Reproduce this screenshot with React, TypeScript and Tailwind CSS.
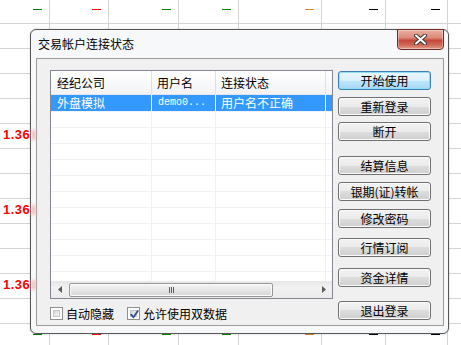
import React from "react";

const cellW = [
  "w-[50px]",
  "w-[59px]",
  "w-[70px]",
  "w-[60px]",
  "w-[83px]",
  "w-[64px]",
  "w-[62px]",
];
const dashColors = ["#008000", "#ff0000", "#008000", "#008000", "#d9822b", "#000000", "#000000"];

function GridRow({ idx }: { idx: number }) {
  const hasDash = idx === 0 || idx === 13;
  const hasNum = idx === 5 || idx === 8 || idx === 11;
  return (
    <div className={`flex shrink-0 border-b border-[#d4d4d4] ${idx === 0 ? "h-[24px]" : "h-[25px]"}`}>
      {cellW.map((w, j) => (
        <div
          key={j}
          className={`${w} shrink-0 border-r border-[#d4d4d4] flex ${
            hasNum && j === 0 ? "justify-start pl-[3px] pt-[3px]" : "justify-end pr-[7px]"
          } ${idx === 0 ? "pt-[9px]" : idx === 13 ? "pt-[10px]" : ""}`}
        >
          {hasDash && <span className="block w-[9px] h-px" style={{ background: dashColors[j] }} />}
          {hasNum && j === 0 && (
            <span className="text-[13px] leading-[15px] font-bold text-[#ff0000] tracking-[0.5px] [font-family:'Liberation_Sans',Arial,sans-serif]">
              1.36
            </span>
          )}
        </div>
      ))}
      <div className="flex-1" />
    </div>
  );
}

function Btn({ label, primary, mt }: { label: string; primary?: boolean; mt: string }) {
  return (
    <div
      className={`${mt} w-[93px] h-[19px] shrink-0 rounded-[3px] border flex items-center justify-center text-[12px] leading-none text-black ${
        primary
          ? "border-[#3c7fb1] bg-[linear-gradient(#eaf6fd_0%,#d9f0fc_50%,#bee6fd_50%,#a7d9f5_100%)] shadow-[inset_0_0_0_1px_#8fdcfb]"
          : "border-[#707070] bg-[linear-gradient(#f2f2f2_0%,#ebebeb_50%,#dddddd_50%,#cfcfcf_100%)] shadow-[inset_0_0_0_1px_#fbfbfb]"
      }`}
    >
      {label}
    </div>
  );
}

function Checkbox({ checked }: { checked?: boolean }) {
  return (
    <div className="relative w-[13px] h-[13px] shrink-0 border border-[#8e8f8f] bg-white p-[2px]">
      <div className="w-full h-full border border-[#c6c6c6] bg-[linear-gradient(135deg,#d6d6d6,#f7f7f7)]" />
      {checked && (
        <svg className="absolute left-[1px] top-[1px]" width="11" height="11" viewBox="0 0 11 11">
          <path d="M2.2 5.6 L4.4 8.2 L8.8 2" fill="none" stroke="#2f4f8f" strokeWidth="1.8" strokeLinecap="round" strokeLinejoin="round" />
        </svg>
      )}
    </div>
  );
}

function ListRow({ selected, first }: { selected?: boolean; first?: boolean }) {
  const line = selected ? "border-white" : "border-[#f1f1f1]";
  return (
    <div
      className={`flex shrink-0 border-b border-[#f1f1f1] ${first ? "h-[17px]" : "h-[16px]"} ${
        selected ? "bg-[#3399ff] text-white" : ""
      }`}
    >
      <div className={`w-[101px] shrink-0 border-r ${line} pl-[6px] flex items-center text-[12px] leading-none`}>
        {selected ? "外盘模拟" : ""}
      </div>
      <div className={`w-[64px] shrink-0 border-r ${line} pl-[6px] flex items-center text-[10px] leading-none [font-family:'Liberation_Mono',monospace]`}>
        {selected ? "demo0..." : ""}
      </div>
      <div className={`w-[110px] shrink-0 border-r ${line} pl-[5px] flex items-center text-[12px] leading-none`}>
        {selected ? "用户名不正确" : ""}
      </div>
      <div className="flex-1" />
    </div>
  );
}

export default function App() {
  return (
    <div className="relative w-[461px] h-[345px] overflow-hidden bg-white text-black [font-family:'Noto_Sans_CJK_SC','Noto_Sans',sans-serif]">
      <div className="flex flex-col">
        {Array.from({ length: 14 }).map((_, i) => (
          <GridRow key={i} idx={i} />
        ))}
      </div>

      {/* dialog */}
      <div className="absolute left-[30px] top-[29px] w-[419px] h-[305px] rounded-[6px] border border-[#555555] bg-[#f7f8f9] flex flex-col shadow-[0_0_3px_rgba(0,0,0,0.15)]">
        {/* glass smears */}
        <span className="absolute left-0 top-[100px] w-[5px] h-[10px] bg-[#f0b0b0] blur-[1.5px] opacity-70" />
        <span className="absolute left-0 top-[175px] w-[5px] h-[10px] bg-[#f0b0b0] blur-[1.5px] opacity-70" />
        <span className="absolute left-0 top-[250px] w-[5px] h-[10px] bg-[#f0b0b0] blur-[1.5px] opacity-70" />

        {/* close button */}
        <div className="absolute right-[4px] top-[-1px] w-[47px] h-[21px] rounded-b-[4px] border border-[#6e2a22] bg-[linear-gradient(#eab0a4_0%,#dd8a7a_40%,#c7483a_55%,#d06a58_80%,#e0a090_100%)] shadow-[inset_0_0_0_1px_rgba(255,255,255,0.35)] flex items-center justify-center">
          <svg width="13" height="11" viewBox="0 0 13 11">
            <path d="M2 1.5 L11 9.5 M11 1.5 L2 9.5" stroke="#3a3a3a" strokeWidth="4" strokeLinecap="round" />
            <path d="M2 1.5 L11 9.5 M11 1.5 L2 9.5" stroke="#ffffff" strokeWidth="2" strokeLinecap="round" />
          </svg>
        </div>

        {/* title */}
        <div className="h-[28px] shrink-0 flex items-center pl-[7px] text-[12px] leading-none">交易帐户连接状态</div>

        {/* panel */}
        <div className="flex-1 ml-[5px] mr-[4px] mb-[7px] border border-[#9c9c9c] bg-[#f0f0f0] flex">
          <div className="pl-[13px] pt-[11px] flex flex-col">
            {/* list */}
            <div className="w-[283px] h-[229px] border border-[#828790] bg-white flex flex-col">
              <div className="h-[24px] shrink-0 flex border-b border-[#e5e5e5] bg-[linear-gradient(#ffffff,#f2f3f5)] text-[12px] leading-none">
                <div className="w-[101px] shrink-0 border-r border-[#dcdfe3] pl-[6px] flex items-center">经纪公司</div>
                <div className="w-[64px] shrink-0 border-r border-[#dcdfe3] pl-[5px] flex items-center">用户名</div>
                <div className="w-[110px] shrink-0 border-r border-[#dcdfe3] pl-[5px] flex items-center">连接状态</div>
                <div className="flex-1" />
              </div>
              <div className="flex-1 overflow-hidden flex flex-col">
                <ListRow selected first />
                {Array.from({ length: 11 }).map((_, i) => (
                  <ListRow key={i} />
                ))}
              </div>
              {/* horizontal scrollbar */}
              <div className="h-[17px] shrink-0 flex items-center bg-[linear-gradient(#e6e6e6,#f2f2f2_40%,#ebebeb)]">
                <div className="w-[17px] h-full shrink-0 flex items-center justify-center">
                  <svg width="4" height="7" viewBox="0 0 4 7">
                    <path d="M4 0 L0 3.5 L4 7 Z" fill="#5a5a5a" />
                  </svg>
                </div>
                <div className="ml-[1px] w-[204px] h-[14px] shrink-0 rounded-[2px] border border-[#979797] bg-[linear-gradient(#f5f5f5,#e6e6e6_50%,#d4d4d4)] shadow-[inset_0_0_0_1px_#fbfbfb] flex items-center justify-center gap-[1px]">
                  <span className="w-px h-[6px] bg-[#5f5f5f]" />
                  <span className="w-px h-[6px] bg-[#5f5f5f]" />
                  <span className="w-px h-[6px] bg-[#5f5f5f]" />
                </div>
                <div className="flex-1" />
                <div className="w-[17px] h-full shrink-0 flex items-center justify-center">
                  <svg width="4" height="7" viewBox="0 0 4 7">
                    <path d="M0 0 L4 3.5 L0 7 Z" fill="#5a5a5a" />
                  </svg>
                </div>
              </div>
            </div>
            {/* checkboxes */}
            <div className="mt-[8px] h-[13px] flex items-center text-[12px] leading-none">
              <Checkbox />
              <span className="ml-[3px]">自动隐藏</span>
              <div className="ml-[13px]">
                <Checkbox checked />
              </div>
              <span className="ml-[3px]">允许使用双数据</span>
            </div>
          </div>

          {/* buttons */}
          <div className="ml-[5px] pt-[12px] flex flex-col">
            <Btn label="开始使用" primary mt="mt-0" />
            <Btn label="重新登录" mt="mt-[7px]" />
            <Btn label="断开" mt="mt-[6px]" />
            <Btn label="结算信息" mt="mt-[15px]" />
            <Btn label="银期(证)转帐" mt="mt-[7px]" />
            <Btn label="修改密码" mt="mt-[8px]" />
            <Btn label="行情订阅" mt="mt-[10px]" />
            <Btn label="资金详情" mt="mt-[11px]" />
            <Btn label="退出登录" mt="mt-[14px]" />
          </div>
        </div>
      </div>
    </div>
  );
}
